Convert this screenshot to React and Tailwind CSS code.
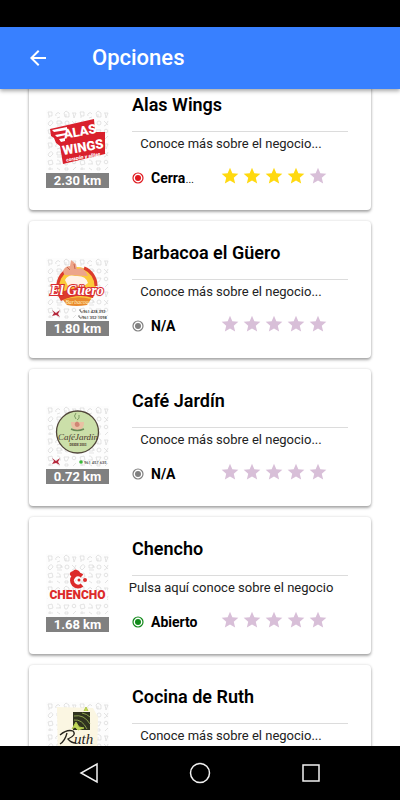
import { MdArrowBack, MdStar, MdPhone } from 'react-icons/md'

const DoodleBackground = ({ id }) => (
  <>
    <defs>
      <pattern id={id} width="32" height="31" patternUnits="userSpaceOnUse">
        <g fill="none" stroke="#d9d9d9" strokeWidth="0.7">
          <path d="M2 2h4v4H3zM3 6v2" />
          <path d="M10 6a2 2 0 1 1 4-2M14 7l-3 1" />
          <path d="M18 3l2-2 3 2v4h-4zM20 7V4" />
          <path d="M26 3h4M27 3l1 5 2-5" />
          <path d="M3 12q3-3 4 1l-3 3-2-2z" />
          <path d="M11 11h4v3h-4zM15 12h1v2M11 16h5" />
          <circle cx="21" cy="13" r="2" />
          <path d="M26 11l4 4M30 11l-2 4-2 1" />
          <path d="M2 20l4-1 1 4-4 1z" />
          <path d="M11 19q4 0 3 4M10 23h5" />
          <path d="M18 20h5l-2 4h-2z" />
          <circle cx="28" cy="21" r="1.8" />
          <path d="M2 28h5M4 26v3M11 27l3 2M19 27h3v2h-3zM27 29l3-3" />
        </g>
      </pattern>
    </defs>
    <rect width="63" height="63" fill="#fdfdfd" />
    <rect width="63" height="63" fill={`url(#${id})`} />
  </>
)

const Chili = () => (
  <path d="M6 52l4 3 4-3-2 4 2 3-4-2-4 1 2-3z" fill="#b5283c" />
)

const AlasLogo = () => (
  <svg viewBox="0 0 63 63" className="block w-full">
    <DoodleBackground id="doodles-alas" />
    <path d="M4 19L48 9l1 13 10 0 0 22-42 10-3-18-4-3-2-5-3-2z" fill="#d9202c" />
    <path d="M6 20l15-3v3l-13 2zM9 25l11-2v2l-9 2zM13 29l6-1v3l-4 1z" fill="#fff" />
    <g
      transform="rotate(-10 34 30)"
      fill="#fff"
      fontFamily="Roboto, sans-serif"
      fontWeight="900"
    >
      <text x="19" y="26" fontSize="13">ALAS</text>
      <text x="15" y="42" fontSize="13">WINGS</text>
      <text x="17" y="49" fontSize="5" fontStyle="italic">corazón y alitas</text>
    </g>
  </svg>
)

const BarbacoaLogo = () => (
  <svg viewBox="0 0 63 63" className="block w-full">
    <DoodleBackground id="doodles-barbacoa" />
    <circle cx="31" cy="28" r="19" fill="#fbc93a" />
    <path d="M12 31A19 19 0 0 1 21 12M38 10a19 19 0 0 1 12 18" fill="none" stroke="#dc3c2c" strokeWidth="3" />
    <path d="M19 17q-3-3-1-6 2-3 6-3l1-6 5 4 1 5 5-1 4 4 2 4z" fill="#eda58a" />
    <path d="M21 9l3 3M28 6l1 5" stroke="#c96650" strokeWidth="1" />
    <path d="M19 22q3-6 10-4 11-1 13 7l-4 3H22z" fill="#fff3e8" />
    <path d="M11 36q18-9 39-5l-3 9q-16-5-32 3z" fill="#dc3c2c" />
    <path d="M17 42q14-5 28-1l-4 6q-11 2-20 0z" fill="#e98a2d" />
    <text x="31" y="37" fontSize="14" textAnchor="middle" fill="#fff" stroke="#d92b31" strokeWidth="2" paintOrder="stroke" fontFamily="'Liberation Serif', serif" fontStyle="italic" fontWeight="700">El Güero</text>
    <text x="31" y="46" fontSize="6" textAnchor="middle" fill="#fff3c4" fontFamily="'Liberation Serif', serif" fontStyle="italic">Barbacoa</text>
    <Chili />
    <g fontSize="4" fontFamily="Roboto, sans-serif" fontWeight="500" fill="#333">
      <MdPhone x="33" y="51" size="4" />
      <text x="37" y="55">961 428 392</text>
      <MdPhone x="32" y="57" size="4" />
      <text x="36" y="61">961 352 1098</text>
    </g>
  </svg>
)

const CafeLogo = () => (
  <svg viewBox="0 0 63 63" className="block w-full">
    <DoodleBackground id="doodles-cafe" />
    <circle cx="31.500" cy="26" r="21" fill="#cbdfa9" stroke="#51463a" strokeWidth="1.300" />
    <path d="M30 13q-3-3 0-6M31 14q3-1 2-5" fill="none" stroke="#7d9b62" strokeWidth="1" />
    <path d="M25 16h13q0 6-4 8h-5q-4-2-4-8z" fill="#e9c0a3" />
    <path d="M29 17q2-3 4 0 2 3-2 4-3-1-2-4z" fill="#cf8574" />
    <path d="M25 23q6 3 13 0" stroke="#6c8c58" strokeWidth="1.500" fill="none" />
    <text x="32" y="34" fontSize="9" textAnchor="middle" fill="#4c3a2d" fontFamily="'Liberation Serif', serif" fontStyle="italic">CaféJardín</text>
    <text x="32" y="40" fontSize="3" textAnchor="middle" fill="#4c3a2d" fontFamily="Roboto, sans-serif" fontWeight="700">DESDE 2003</text>
    <Chili />
    <circle cx="35" cy="56" r="1.800" fill="#39b838" />
    <text x="38" y="58" fontSize="4" fontFamily="Roboto, sans-serif" fontWeight="500" fill="#444">961 457 635</text>
  </svg>
)

const ChenchoLogo = () => (
  <svg viewBox="0 0 63 63" className="block w-full">
    <DoodleBackground id="doodles-chencho" />
    <rect x="2" y="36" width="59" height="12" fill="#fdfdfd" />
    <path d="M24 21q-1-3 3-4 2-3 6 0l2 3q-6-1-9 3z" fill="#dc2b2b" />
    <path d="M36 22a6 6 0 1 0 0 9" fill="none" stroke="#dc2b2b" strokeWidth="4" />
    <circle cx="33" cy="26" r="1.500" fill="#dc2b2b" />
    <circle cx="39" cy="26" r="2" fill="#dc2b2b" />
    <text x="31.500" y="45" fontSize="12" textAnchor="middle" fill="#dc2b2b" fontFamily="Roboto, sans-serif" fontWeight="900">CHENCHO</text>
  </svg>
)

const RuthLogo = () => (
  <svg viewBox="0 0 63 63" className="block w-full">
    <DoodleBackground id="doodles-ruth" />
    <path d="M11 5l36 1 5 9-1 46H12z" fill="#fbf6e2" />
    <rect x="27" y="10" width="17" height="18" fill="#30331f" />
    <path d="M28 14q10-2 16 8M28 18q8-1 13 9M36 11q5 1 8 4M28 23q5 0 6 4" fill="none" stroke="#8aa04c" strokeWidth="1" />
    <path d="M38 9l2-4 2 4M30 20l3 5 5 1-6 2-3-3-3 2z" fill="#c4d95a" stroke="#b0c94a" />
    <path d="M14 33q7-6 13-4 4 4-5 8 3 4 8 4M21 31q-2 8-7 11" fill="none" stroke="#26231c" strokeWidth="1.300" />
    <text x="28" y="42" fontSize="15" fill="#26231c" fontFamily="'Liberation Serif', serif" fontStyle="italic">uth</text>
    <rect x="30" y="45" width="16" height="1" fill="#5c5848" />
  </svg>
)

const businesses = [
  { name: 'Alas Wings', description: 'Conoce más sobre el negocio...', distance: '2.30 km', status: 'Cerra', cut: true, color: 'text-[#e0191f]', rating: 4, Logo: AlasLogo },
  { name: 'Barbacoa el Güero', description: 'Conoce más sobre el negocio...', distance: '1.80 km', status: 'N/A', color: 'text-[#808080]', rating: 0, Logo: BarbacoaLogo },
  { name: 'Café Jardín', description: 'Conoce más sobre el negocio...', distance: '0.72 km', status: 'N/A', color: 'text-[#808080]', rating: 0, Logo: CafeLogo },
  { name: 'Chencho', description: 'Pulsa aquí conoce sobre el negocio', distance: '1.68 km', status: 'Abierto', color: 'text-[#128a1b]', rating: 0, Logo: ChenchoLogo },
  { name: 'Cocina de Ruth', description: 'Conoce más sobre el negocio...', distance: '', status: '', color: 'text-[#808080]', rating: 0, Logo: RuthLogo },
]

const StatusDot = ({ color }) => (
  <svg viewBox="0 0 12 12" className={`size-3 shrink-0 ${color}`}>
    <circle cx="6" cy="6" r="5" fill="none" stroke="currentColor" strokeWidth="1.200" />
    <circle cx="6" cy="6" r="3" fill="currentColor" />
  </svg>
)

const Rating = ({ value }) => (
  <div className="flex gap-[2px] pb-1" role="img" aria-label={`${value} de 5`}>
    {[1, 2, 3, 4, 5].map((n) => (
      <MdStar key={n} className={n <= value ? 'size-5 text-[#ffd90f]' : 'size-5 text-[#d8bfd8]'} />
    ))}
  </div>
)

const BusinessCard = ({ business }) => {
  const { name, description, distance, status, cut, color, rating, Logo } = business

  return (
    <li className="flex h-[137px] shrink-0 rounded bg-white pl-[17px] pr-[23px] shadow-[0_2px_3px_rgba(0,0,0,0.32),0_0_3px_rgba(0,0,0,0.14)]">
      <div className="w-[63px] shrink-0 pt-[37px]">
        <Logo />
        <p className="h-[15px] bg-[#808080] text-center text-[13px] leading-[15px] font-bold text-white">{distance}</p>
      </div>
      <div className="min-w-0 flex-1 pt-5 pl-[17px]">
        <div className="ml-1.5 h-[39px] border-b border-[#dcdcdc]">
          <h2 className="text-lg leading-6 font-semibold">{name}</h2>
        </div>
        <p className="flex h-6 w-[210px] items-center justify-center text-[13px] whitespace-nowrap text-[#222]">{description}</p>
        <div className="mt-[10px] ml-1.5 flex h-6 items-center">
          <StatusDot color={color} />
          <p className="ml-[7px] w-[69px] text-[14px] leading-6 font-bold">
            {status}
            {cut && <span className="font-light">…</span>}
          </p>
          <Rating value={rating} />
        </div>
      </div>
    </li>
  )
}

const App = () => {
  return (
    <div className="flex h-screen flex-col overflow-hidden bg-white font-[Roboto,sans-serif] text-black">
      <div className="h-[27px] shrink-0 bg-black" />
      <header className="z-10 flex h-[62px] shrink-0 items-center bg-[#3880ff] pl-[26px] text-white shadow-[0_2px_4px_rgba(0,0,0,0.35)]">
        <button type="button" aria-label="Volver">
          <MdArrowBack className="size-6" />
        </button>
        <h1 className="ml-[42px] text-[22px] leading-7 font-medium">Opciones</h1>
      </header>

      <main className="min-h-0 flex-1 overflow-hidden">
        <ul className="-mt-4 flex flex-col gap-[11px] px-[29px]">
          {businesses.map((business) => (
            <BusinessCard key={business.name} business={business} />
          ))}
        </ul>
      </main>

      <nav className="z-10 flex h-[54px] shrink-0 items-center justify-around bg-black px-[34px] text-[#f2f2f2]">
        <button type="button" aria-label="Atrás">
          <svg viewBox="0 0 24 24" className="size-6" fill="none" stroke="currentColor" strokeWidth="1.500">
            <path d="M20 3v18L4 12z" />
          </svg>
        </button>
        <button type="button" aria-label="Inicio">
          <svg viewBox="0 0 24 24" className="size-6" fill="none" stroke="currentColor" strokeWidth="1.500">
            <circle cx="12" cy="12" r="9.500" />
          </svg>
        </button>
        <button type="button" aria-label="Recientes">
          <svg viewBox="0 0 24 24" className="size-6" fill="none" stroke="currentColor" strokeWidth="1.500">
            <rect x="4" y="4" width="16" height="16" />
          </svg>
        </button>
      </nav>
    </div>
  )
}

export default App
